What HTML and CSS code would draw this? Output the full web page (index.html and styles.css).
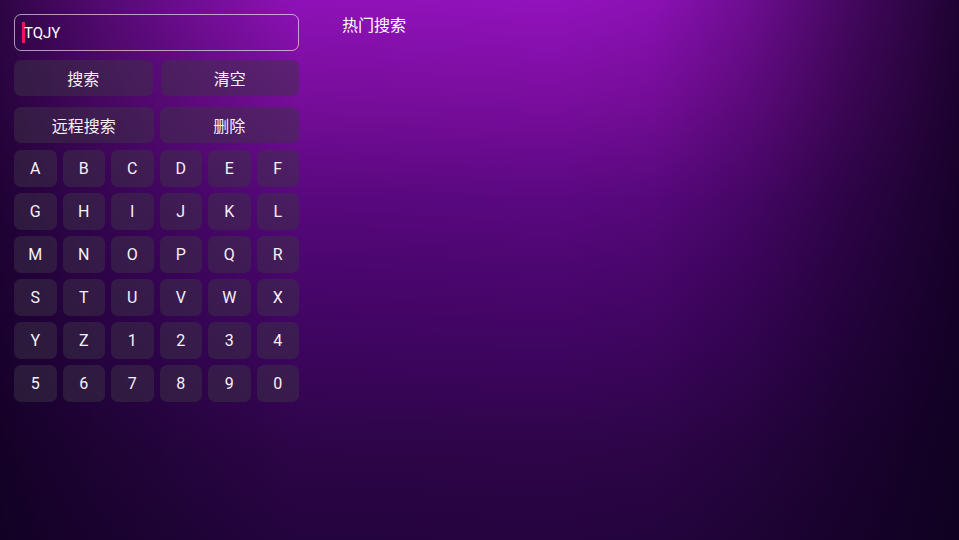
FILE: index.html
```html
<!DOCTYPE html>
<html lang="zh-CN">
<head>
<meta charset="utf-8">
<title>搜索</title>
<link rel="stylesheet" href="styles.css">
</head>
<body>
<div class="screen">
  <section class="left">
    <div class="search-input"><span class="caret"></span><span class="query">TQJY</span></div>
    <div class="actions actions-1">
      <div class="btn">搜索</div>
      <div class="btn">清空</div>
    </div>
    <div class="actions actions-2">
      <div class="btn">远程搜索</div>
      <div class="btn">删除</div>
    </div>
    <div class="keyboard">
      <div class="key">A</div><div class="key">B</div><div class="key">C</div><div class="key">D</div><div class="key">E</div><div class="key">F</div>
      <div class="key">G</div><div class="key">H</div><div class="key">I</div><div class="key">J</div><div class="key">K</div><div class="key">L</div>
      <div class="key">M</div><div class="key">N</div><div class="key">O</div><div class="key">P</div><div class="key">Q</div><div class="key">R</div>
      <div class="key">S</div><div class="key">T</div><div class="key">U</div><div class="key">V</div><div class="key">W</div><div class="key">X</div>
      <div class="key">Y</div><div class="key">Z</div><div class="key">1</div><div class="key">2</div><div class="key">3</div><div class="key">4</div>
      <div class="key">5</div><div class="key">6</div><div class="key">7</div><div class="key">8</div><div class="key">9</div><div class="key">0</div>
    </div>
  </section>
  <section class="right">
    <div class="hot-title">热门搜索</div>
  </section>
</div>
</body>
</html>
```
FILE: styles.css
```css
html, body {
  margin: 0;
  padding: 0;
}
body {
  width: 959px;
  height: 540px;
  overflow: hidden;
  font-family: Roboto, "Noto Sans CJK SC", sans-serif;
  color: #f6f1f8;
}
.screen {
  width: 959px;
  height: 540px;
  display: flex;
  box-sizing: border-box;
  padding: 14px;
  background:
    linear-gradient(to right,
      rgba(12,0,28,0.75) 0%,
      rgba(12,0,28,0.48) 10.4%,
      rgba(12,0,28,0.24) 20.9%,
      rgba(12,0,28,0.03) 31%,
      rgba(12,0,28,0) 58%,
      rgba(12,0,28,0.05) 68%,
      rgba(12,0,28,0.16) 73%,
      rgba(12,0,28,0.27) 78%,
      rgba(12,0,28,0.58) 88.6%,
      rgba(12,0,28,0.86) 100%),
    linear-gradient(to bottom,
      #9212bc 0%,
      #7a0d9e 18.5%,
      #5a0880 37%,
      #4c0670 50%,
      #3e0560 65%,
      #2e0549 83%,
      #25043f 100%);
}
.left {
  width: 285px;
  flex: none;
  display: flex;
  flex-direction: column;
}
.search-input {
  height: 37px;
  box-sizing: border-box;
  border: 1px solid rgba(255,255,255,0.6);
  border-radius: 7px;
  display: flex;
  align-items: center;
  padding-left: 7px;
  font-size: 15px;
}
.caret {
  display: inline-block;
  width: 3px;
  height: 21px;
  background: #f5105e;
  margin-right: -1px;
}
.query {
  color: #ffffff;
}
.actions {
  display: flex;
  height: 36px;
}
.actions-1 {
  margin-top: 9px;
  gap: 8px;
}
.actions-2 {
  margin-top: 11px;
  gap: 6px;
}
.btn {
  flex: 1;
  border-radius: 7px;
  background: rgba(60,50,70,0.5);
  display: flex;
  align-items: center;
  justify-content: center;
  font-family: "Noto Sans CJK SC", sans-serif;
  font-size: 16px;
  padding-bottom: 1px;
}
.keyboard {
  margin-top: 7px;
  display: grid;
  grid-template-columns: repeat(6, 1fr);
  grid-auto-rows: 37px;
  gap: 6px;
}
.key {
  border-radius: 7px;
  background: rgba(60,50,70,0.5);
  display: flex;
  align-items: center;
  justify-content: center;
  font-size: 16px;
}
.right {
  margin-left: 43px;
}
.hot-title {
  font-family: "Noto Sans CJK SC", sans-serif;
  font-size: 16px;
  line-height: 20px;
  margin-top: 0;
  color: #ffffff;
}
```
